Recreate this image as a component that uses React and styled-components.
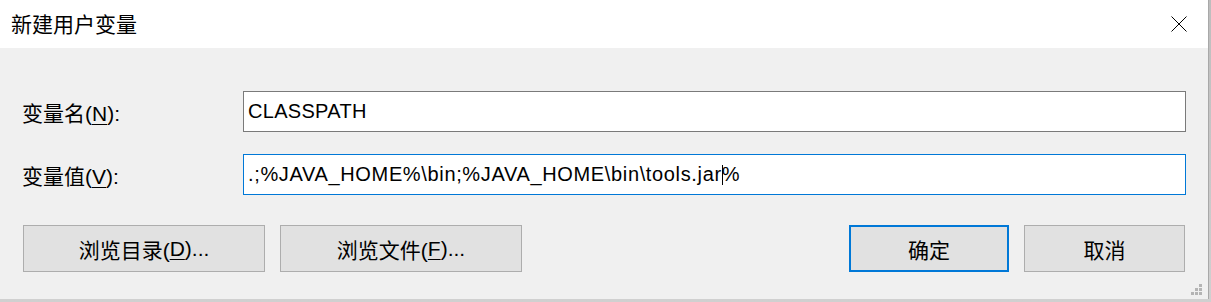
import React from 'react';
import styled, { createGlobalStyle } from 'styled-components';

const GlobalStyle = createGlobalStyle`
  html, body {
    margin: 0;
    padding: 0;
    background: #c6c6c6;
  }
  body {
    font-family: "Liberation Sans", "Noto Sans CJK SC", sans-serif;
  }
`;

const Desktop = styled.div`
  width: 1211px;
  height: 302px;
  background: linear-gradient(#bdbdbd, #d0d0d0);
  overflow: hidden;
`;

const Window = styled.div`
  width: 1208px;
  height: 299px;
  border-right: 1px solid #a8a8a8;
  background: #f0f0f0;
  display: flex;
  flex-direction: column;
  position: relative;
`;

const TitleBar = styled.div`
  height: 48px;
  background: #ffffff;
  display: flex;
  align-items: center;
  justify-content: space-between;
  padding-left: 11px;
`;

const Title = styled.div`
  font-size: 21px;
  color: #000;
  line-height: 1;
`;

const CloseButton = styled.div`
  width: 58px;
  height: 48px;
  display: flex;
  align-items: center;
  justify-content: center;
`;

const Body = styled.div`
  padding: 43px 22px 0 22px;
  display: flex;
  flex-direction: column;
`;

const FieldRow = styled.div`
  display: grid;
  grid-template-columns: 221px 1fr;
  align-items: center;
  margin-bottom: 22px;
`;

const Label = styled.div`
  font-size: 21px;
  color: #000;
  u {
    text-decoration-thickness: 1px;
    text-underline-offset: 3px;
  }
`;

const TextBox = styled.div`
  height: 41px;
  box-sizing: border-box;
  background: #fff;
  border: 1px solid ${(p) => (p.$focused ? '#0078d7' : '#7a7a7a')};
  display: flex;
  align-items: center;
  padding-left: 4px;
  font-size: 20px;
  letter-spacing: ${(p) => p.$spacing || 0}px;
  color: #000;
  white-space: pre;
`;

const Caret = styled.span`
  display: inline-block;
  width: 1px;
  height: 20px;
  background: #000;
  margin: 0 -1px 0 0;
  vertical-align: middle;
`;

const ButtonRow = styled.div`
  display: flex;
  align-items: center;
  margin-top: 8px;
  padding-left: 1px;
  padding-right: 1px;
`;

const ButtonGroup = styled.div`
  display: flex;
  gap: 15px;
`;

const Spacer = styled.div`
  flex: 1;
`;

const Button = styled.div`
  width: ${(p) => p.$width}px;
  height: 47px;
  box-sizing: border-box;
  background: #e1e1e1;
  border: ${(p) => (p.$default ? '2px solid #0078d7' : '1px solid #adadad')};
  display: flex;
  align-items: center;
  justify-content: center;
  font-size: 21px;
  color: #000;
  u {
    text-decoration-thickness: 1px;
    text-underline-offset: 3px;
  }
`;

const Grip = styled.svg`
  position: absolute;
  right: 5px;
  bottom: 3px;
`;

const App = () => {
  return (
    <>
      <GlobalStyle />
      <Desktop>
        <Window>
          <TitleBar>
            <Title>新建用户变量</Title>
            <CloseButton>
              <svg width="16" height="16" viewBox="0 0 16 16">
                <path d="M0.5 0.5 L15.5 15.5 M15.5 0.5 L0.5 15.5" stroke="#000" strokeWidth="1" fill="none" />
              </svg>
            </CloseButton>
          </TitleBar>
          <Body>
            <FieldRow>
              <Label>
                变量名(<u>N</u>):
              </Label>
              <TextBox $spacing={0.3}>CLASSPATH</TextBox>
            </FieldRow>
            <FieldRow>
              <Label>
                变量值(<u>V</u>):
              </Label>
              <TextBox $focused $spacing={0.65}>
                {'.;%JAVA_HOME%\\bin;%JAVA_HOME\\bin\\tools.jar'}
                <Caret />
                {'%'}
              </TextBox>
            </FieldRow>
            <ButtonRow>
              <ButtonGroup>
                <Button $width={242}>
                  浏览目录(<u>D</u>)...
                </Button>
                <Button $width={242}>
                  浏览文件(<u>F</u>)...
                </Button>
              </ButtonGroup>
              <Spacer />
              <ButtonGroup>
                <Button $width={160} $default>
                  确定
                </Button>
                <Button $width={161}>取消</Button>
              </ButtonGroup>
            </ButtonRow>
          </Body>
          <Grip width="12" height="12" viewBox="0 0 12 12">
            <rect x="8" y="0" width="3" height="3" fill="#b4b4b4" />
            <rect x="4" y="4" width="3" height="3" fill="#b4b4b4" />
            <rect x="8" y="4" width="3" height="3" fill="#b4b4b4" />
            <rect x="0" y="8" width="3" height="3" fill="#b4b4b4" />
            <rect x="4" y="8" width="3" height="3" fill="#b4b4b4" />
            <rect x="8" y="8" width="3" height="3" fill="#b4b4b4" />
          </Grip>
        </Window>
      </Desktop>
    </>
  );
};

export default App;
